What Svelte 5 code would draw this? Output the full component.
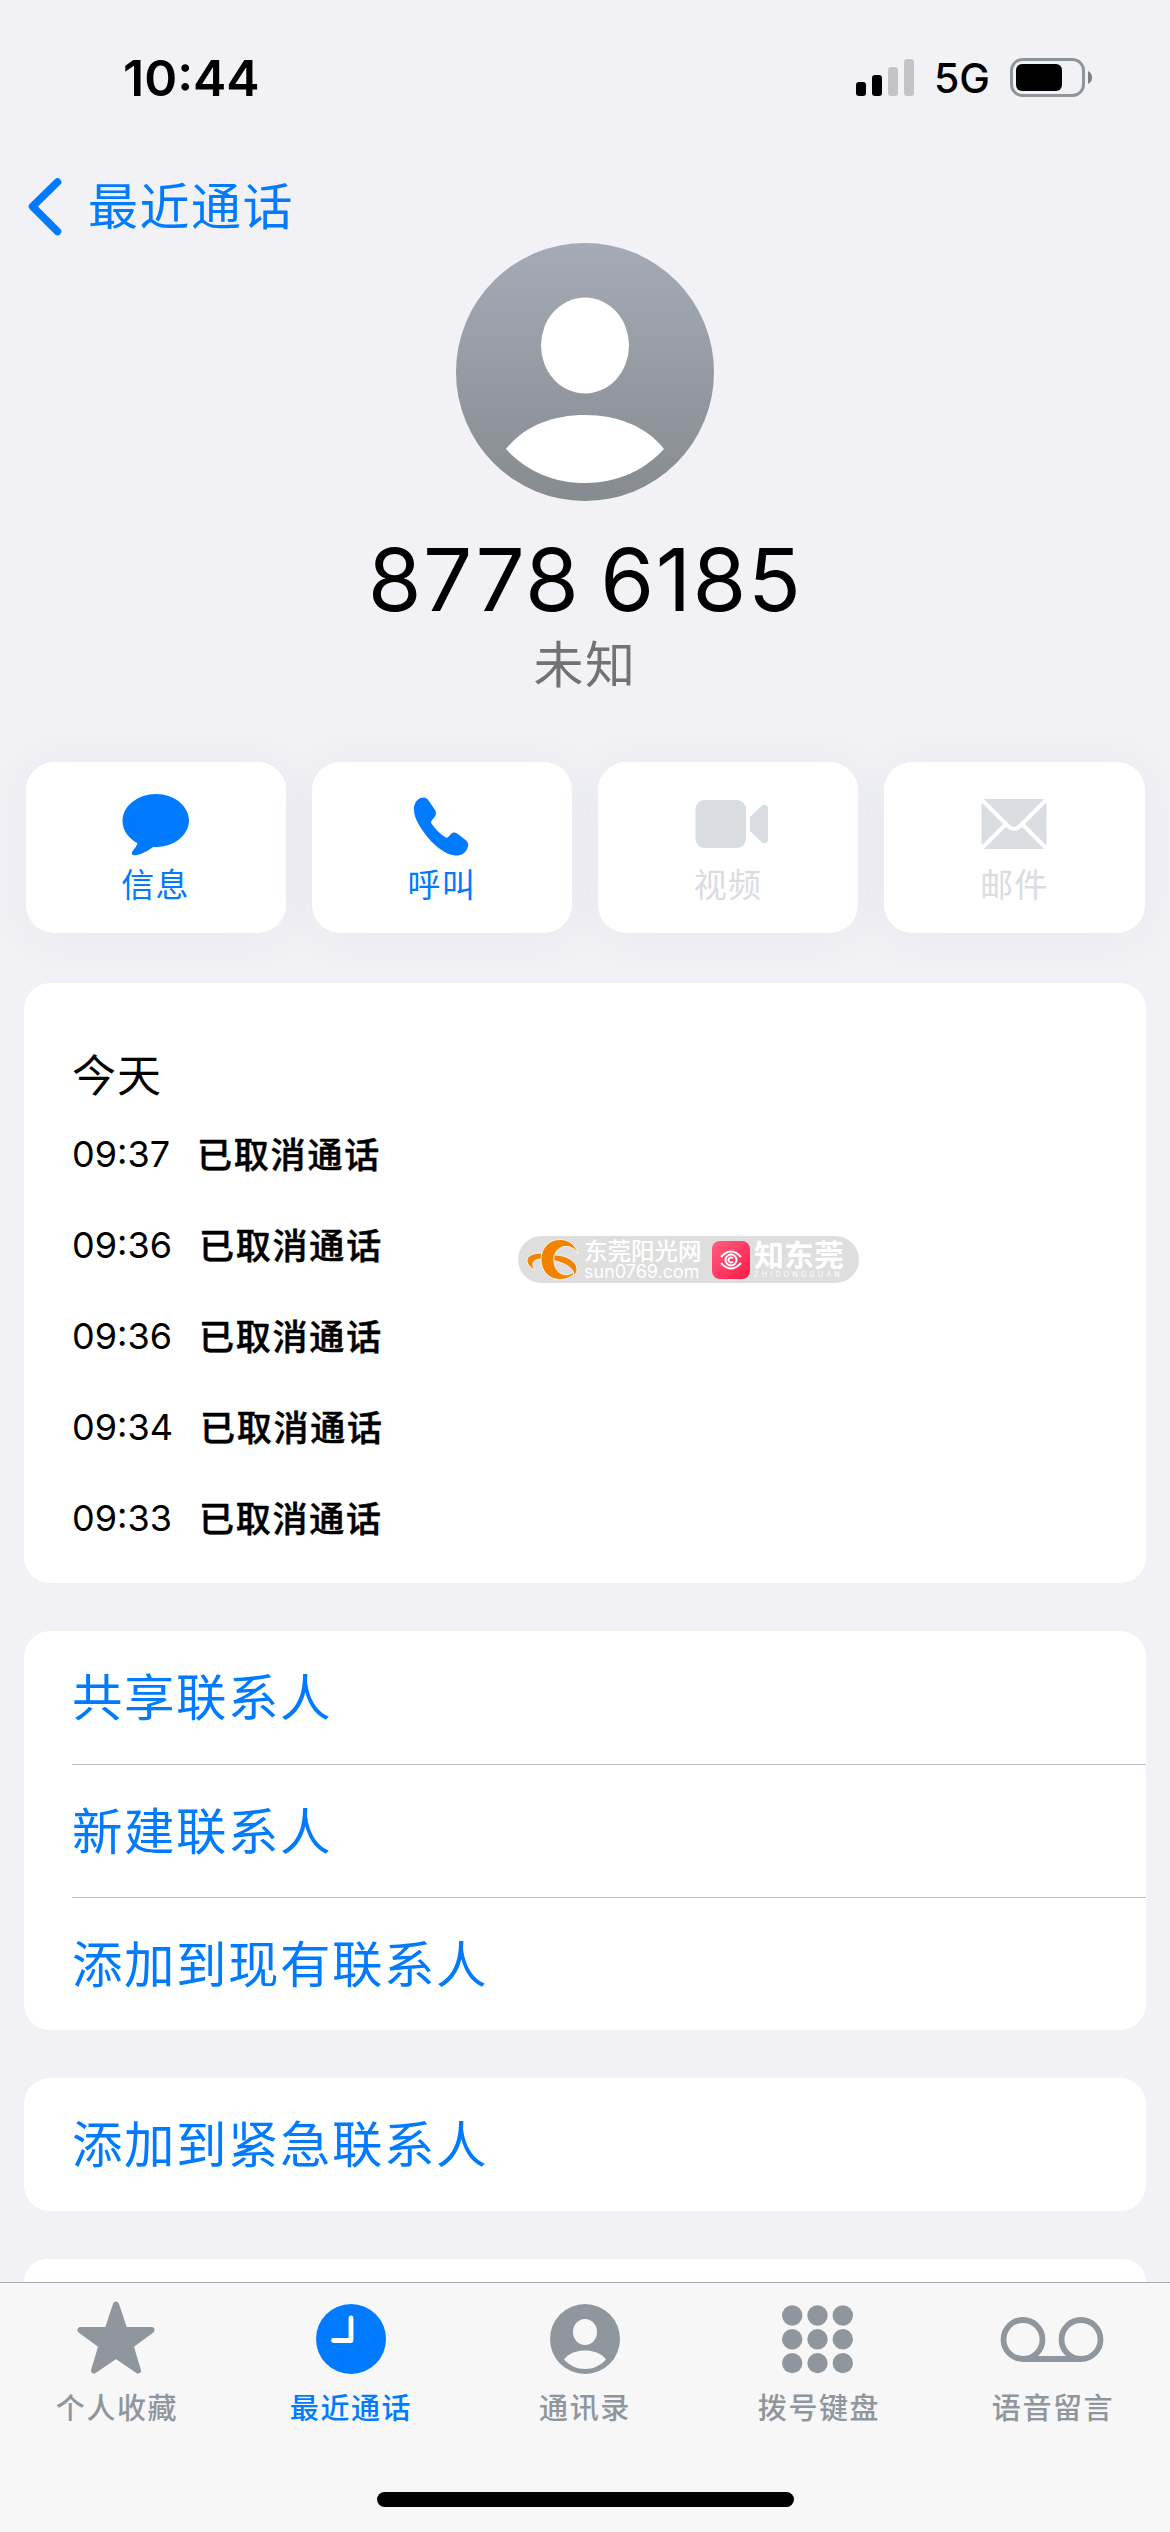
<script lang="ts">
	const actions = [
		{ icon: 'message', label: '信息', enabled: true },
		{ icon: 'call', label: '呼叫', enabled: true },
		{ icon: 'video', label: '视频', enabled: false },
		{ icon: 'mail', label: '邮件', enabled: false }
	];

	const calls = [
		{ time: '09:37', status: '已取消通话' },
		{ time: '09:36', status: '已取消通话' },
		{ time: '09:36', status: '已取消通话' },
		{ time: '09:34', status: '已取消通话' },
		{ time: '09:33', status: '已取消通话' }
	];

	const contactLinks = ['共享联系人', '新建联系人', '添加到现有联系人'];

	const tabs = [
		{ icon: 'star', label: '个人收藏' },
		{ icon: 'clock', label: '最近通话' },
		{ icon: 'person', label: '通讯录' },
		{ icon: 'keypad', label: '拨号键盘' },
		{ icon: 'voicemail', label: '语音留言' }
	];
	const activeTab = 'clock';
	const dots = [0, 1, 2];
</script>

<div class="phone">
	<header class="status-bar">
		<span class="clock">10:44</span>
		<div class="indicators">
			<svg class="signal" width="58" height="38" viewBox="0 0 58 38">
				<rect x="0" y="23" width="10" height="14" rx="3" />
				<rect x="16" y="16" width="10" height="21" rx="3" />
				<rect class="weak" x="32" y="8" width="10" height="29" rx="3" />
				<rect class="weak" x="48" y="0" width="10" height="37" rx="3" />
			</svg>
			<span class="network">5G</span>
			<svg class="battery" width="82" height="40" viewBox="0 0 82 40">
				<rect x="1.5" y="1.5" width="72" height="36" rx="11" fill="none" stroke="#8e959c" stroke-width="3" />
				<rect x="6" y="6" width="46" height="27" rx="6" />
				<path d="M78 13q4 2 4 6.500t-4 6.500z" fill="#7c8084" />
			</svg>
		</div>
	</header>

	<nav class="back">
		<svg width="34" height="58" viewBox="0 0 34 58">
			<path d="M29.500 4 4.500 28.500l25 25" fill="none" stroke="#007aff" stroke-width="7.500" stroke-linecap="round" stroke-linejoin="round" />
		</svg>
		<span>最近通话</span>
	</nav>

	<section class="profile">
		<svg class="avatar" width="258" height="258" viewBox="0 0 258 258">
			<defs>
				<linearGradient id="avatar-fill" x1="0" y1="0" x2="0" y2="1">
					<stop offset="0" stop-color="#a5abb6" />
					<stop offset="1" stop-color="#868b90" />
				</linearGradient>
			</defs>
			<circle cx="129" cy="129" r="129" fill="url(#avatar-fill)" />
			<ellipse cx="129" cy="102.500" rx="44" ry="48" fill="#fff" />
			<path d="M50 206C68 183 97 172 129 172s61 11 79 34c-20 22-48 34-79 34s-59-12-79-34z" fill="#fff" />
		</svg>
		<h1>8778 6185</h1>
		<p>未知</p>
	</section>

	<section class="actions">
		{#each actions as action}
			<div class="action" class:disabled={!action.enabled}>
				<svg width="76" height="72" viewBox="0 0 76 72">
					{#if action.icon === 'message'}
						<path d="M38 2C56 2 71 14 71 28.500S56 55 38 55h-3c-5 4-12 7.500-18 8.300-3 .3-4-2-2.500-4 2-2.500 4-5 5-8C10 46 4.500 38 4.500 29 4.500 14 20 2 38 2z" />
					{:else if action.icon === 'call'}
						<path transform="translate(.5 0) scale(.94 1)" d="M17 6c4-1.500 7 0 9 3l6.500 9c1.700 2.500 1 5-.5 7l-3 3.500c-1 1.200-1 2 0 3.500 4 5.500 8.500 9.500 14 13 1.500 1 2.400.8 3.500 0l3-3c2-2 4.300-2 6.500-.5l9 6.500c3 2.300 3.500 4.600 2 8-2 5-7 8-13 7.500-8-.6-17-6-25.500-14C18 38 10 27 10 17c0-5 3-9.500 7-11z" />
					{:else if action.icon === 'video'}
						<rect x="5.500" y="8" width="50.500" height="48" rx="9" />
						<path d="M60 25l11-10.500c3-3 7-2 7 2v31c0 4-4 5-7 2L60 39z" />
					{:else}
						<rect x="5.500" y="7" width="65" height="50" rx="4" />
						<path class="cut" d="M5 7l27 27q6 6 12 0L71 7M5 57l25-25M71 57L46 32" />
					{/if}
				</svg>
				<span>{action.label}</span>
			</div>
		{/each}
	</section>

	<section class="card history">
		<h2>今天</h2>
		{#each calls as call}
			<div class="call">
				<time>{call.time}</time>
				<span>{call.status}</span>
			</div>
		{/each}

		<div class="watermark">
			<svg class="sun-logo" width="54" height="44" viewBox="0 0 54 44">
				<g fill="#f08300" stroke="#fff" stroke-width=".8">
					<path d="M15.500 15C7 15 1 18 1 22.500c0 3 3 7 8 10-3-5-3-8 0-10 2-1 4-1.500 6.500-1.500z" />
					<path d="M52.500 16C49 6 42 1.500 34 1.500 23 1.500 15 10 15 21.500s8 20 19 20c8 0 14-4 17-10-4 4-9 6-13 5-6-1-10-7-10-14 0-8 4-13 10-14 6-1 11 2 14.500 7.500z" />
					<path d="M28 17c12 0 23 6 23 14.500 0 2-1 4-3 6 0-8-9-12-20-15z" />
				</g>
			</svg>
			<div class="site">
				<b>东莞阳光网</b>
				<small>sun0769.com</small>
			</div>
			<svg class="eye-logo" width="38" height="38" viewBox="0 0 38 38">
				<defs>
					<linearGradient id="eye-fill" x1="0" y1="0" x2="1" y2="1">
						<stop offset="0" stop-color="#ff6080" />
						<stop offset="1" stop-color="#ff1848" />
					</linearGradient>
				</defs>
				<rect width="38" height="38" rx="8" fill="url(#eye-fill)" />
				<g fill="none" stroke="#fff" stroke-width="2">
					<path d="M9 16q10-11 20 0M9 22q10 11 20 0" />
					<circle cx="19" cy="19" r="5.500" />
					<path d="M21 17.500a2.500 2.500 0 1 0 0 3" />
				</g>
			</svg>
			<div class="brand">
				<b>知东莞</b>
				<small>ZHIDONGGUAN</small>
			</div>
		</div>
	</section>

	<section class="card links">
		{#each contactLinks as link}
			<div class="link">{link}</div>
		{/each}
	</section>

	<section class="card links">
		<div class="link">添加到紧急联系人</div>
	</section>

	<section class="card next"></section>

	<footer class="tab-bar">
		<div class="tabs">
			{#each tabs as tab}
				<div class="tab" class:active={tab.icon === activeTab}>
					<svg width="104" height="76" viewBox="0 0 104 76">
						{#if tab.icon === 'star'}
							<path d="M51 3.500l8.500 25.500H86.500L65.500 44.500 73 69.500 51 54.500 29 69.500l7.500-25L15.500 29h27z" stroke="currentColor" stroke-width="6" stroke-linejoin="round" />
						{:else if tab.icon === 'clock'}
							<circle cx="52" cy="38" r="35" />
							<path d="M52 17v22.500H34.500" fill="none" stroke="#fff" stroke-width="4.800" stroke-linecap="round" stroke-linejoin="round" />
						{:else if tab.icon === 'person'}
							<circle cx="52" cy="38" r="35" />
							<ellipse cx="52" cy="31" rx="12" ry="13" fill="#f7f7f8" />
							<path d="M31 58.500C36 52 44 49.500 52 49.500s16 2.500 21 9C67 65 60 68 52 68s-15-3-21-9.500z" fill="#f7f7f8" />
						{:else if tab.icon === 'keypad'}
							{#each dots as row}
								{#each dots as col}
									<circle cx={25.200 + col * 25.300} cy={14.500 + row * 23.800} r="10.2" />
								{/each}
							{/each}
						{:else}
							<g fill="none" stroke="currentColor" stroke-width="5.800">
								<circle cx="22" cy="38.500" r="19.500" />
								<circle cx="80" cy="38.500" r="19.500" />
								<path d="M22 58h58" />
							</g>
						{/if}
					</svg>
					<span>{tab.label}</span>
				</div>
			{/each}
		</div>
		<div class="home-indicator"></div>
	</footer>
</div>

<style>
	:global(body) {
		background: #f1f1f6;
	}

	.phone {
		display: flex;
		flex-direction: column;
		box-sizing: border-box;
		width: 1170px;
		height: 2532px;
		overflow: hidden;
		background: #f1f1f6;
		color: #000;
		font-family: Inter, 'Noto Sans CJK SC', sans-serif;
	}

	svg {
		display: block;
		flex: none;
		fill: currentColor;
		overflow: visible;
	}

	h1,
	h2,
	p {
		margin: 0;
		font-weight: 400;
	}

	.status-bar {
		display: flex;
		justify-content: space-between;
		height: 156px;
		flex: none;
		padding: 0 78px 0 123px;
		box-sizing: border-box;
		line-height: 156px;
	}

	.clock {
		font-size: 50px;
		font-weight: 600;
	}

	.indicators {
		display: flex;
		align-items: center;
	}

	.network {
		margin: 0 20px;
		font-size: 41px;
		font-weight: 500;
	}

	.weak {
		fill: #c4c4c6;
	}

	.back {
		display: flex;
		align-items: center;
		flex: none;
		gap: 26px;
		height: 87px;
		padding: 14px 0 0 28px;
		box-sizing: border-box;
		color: #007aff;
		font-size: 50px;
		letter-spacing: 1.5px;
	}

	.back span {
		margin-top: -7px;
	}

	.back,
	.profile p,
	.action,
	.link,
	.tab,
	h2,
	.call span {
		font-family: 'Noto Sans CJK SC', sans-serif;
	}

	.profile {
		display: flex;
		flex-direction: column;
		align-items: center;
		flex: none;
		height: 519px;
	}

	.profile h1 {
		margin-top: 26px;
		font-size: 87px;
		line-height: 105px;
		letter-spacing: 1.5px;
		word-spacing: -6px;
		white-space: nowrap;
	}

	.profile p {
		margin-top: -4px;
		color: #727274;
		font-size: 50px;
		line-height: 66px;
		letter-spacing: 1.5px;
	}

	.actions {
		display: grid;
		grid-template-columns: repeat(4, 1fr);
		gap: 26px;
		flex: none;
		padding: 0 25.5px;
		height: 171px;
		margin-bottom: 50px;
	}

	.action {
		display: flex;
		flex-direction: column;
		align-items: center;
		padding-top: 30px;
		border-radius: 28px;
		background: #fff;
		color: #007aff;
		font-size: 33px;
		letter-spacing: 1.4px;
		line-height: 44px;
		box-shadow: 0 4px 50px rgba(60, 70, 100, 0.05);
	}

	.action span {
		margin-top: -3px;
	}

	.disabled {
		color: #d9dce1;
	}

	.cut {
		fill: none;
		stroke: #fff;
		stroke-width: 4;
	}

	.card {
		position: relative;
		flex: none;
		margin: 0 24px 48px;
		border-radius: 26px;
		background: #fff;
	}

	.history {
		box-sizing: border-box;
		height: 600px;
		padding: 60px 48px 0;
	}

	.history h2 {
		margin-bottom: 4px;
		font-size: 44px;
		line-height: 60px;
		letter-spacing: 1px;
	}

	.call {
		display: flex;
		align-items: center;
		gap: 27px;
		height: 91px;
		font-size: 36px;
	}

	.call time {
		padding-top: 2px;
	}

	.call span {
		font-size: 35px;
		font-weight: 500;
		letter-spacing: 1.8px;
		-webkit-text-stroke: 0.5px #000;
	}

	/* floats above the call list */
	.watermark {
		position: absolute;
		left: 494px;
		top: 253px;
		display: flex;
		align-items: center;
		box-sizing: border-box;
		width: 341px;
		height: 47px;
		padding-left: 8px;
		border-radius: 24px;
		background: #dedede;
		color: #fff;
		white-space: nowrap;
	}

	.site,
	.brand {
		display: flex;
		flex-direction: column;
	}

	.site {
		width: 128px;
		margin-left: 4px;
	}

	.site b {
		font-size: 23.5px;
		font-weight: 500;
		line-height: 24px;
	}

	.site small {
		font-size: 18px;
		line-height: 15px;
	}

	.brand {
		margin-left: 4px;
	}

	.brand b {
		font-size: 30px;
		line-height: 31px;
	}

	.brand small {
		font-size: 7px;
		line-height: 8px;
		letter-spacing: 3.3px;
	}

	.link {
		height: 133px;
		margin-left: 48px;
		color: #007aff;
		font-size: 50.5px;
		line-height: 127px;
		letter-spacing: 1.5px;
		box-sizing: border-box;
	}

	.link + .link {
		border-top: 1px solid #bfbfc2;
	}

	.next {
		flex: none;
		height: 23px;
		margin-bottom: 0;
		border-radius: 26px 26px 0 0;
	}

	.tab-bar {
		flex: 1;
		border-top: 1px solid #a5a9b5;
		background: #f7f7f8;
	}

	.tabs {
		display: grid;
		grid-template-columns: repeat(5, 234px);
		padding-top: 18px;
	}

	.tab {
		display: flex;
		flex-direction: column;
		align-items: center;
		color: #90969d;
		font-size: 29px;
		font-weight: 500;
		line-height: 40px;
		letter-spacing: 1.6px;
	}

	.tab span {
		margin-top: 9px;
	}

	.active {
		color: #007aff;
	}

	.home-indicator {
		width: 417px;
		height: 15px;
		margin: 66px auto 0;
		border-radius: 8px;
		background: #000;
	}
</style>
